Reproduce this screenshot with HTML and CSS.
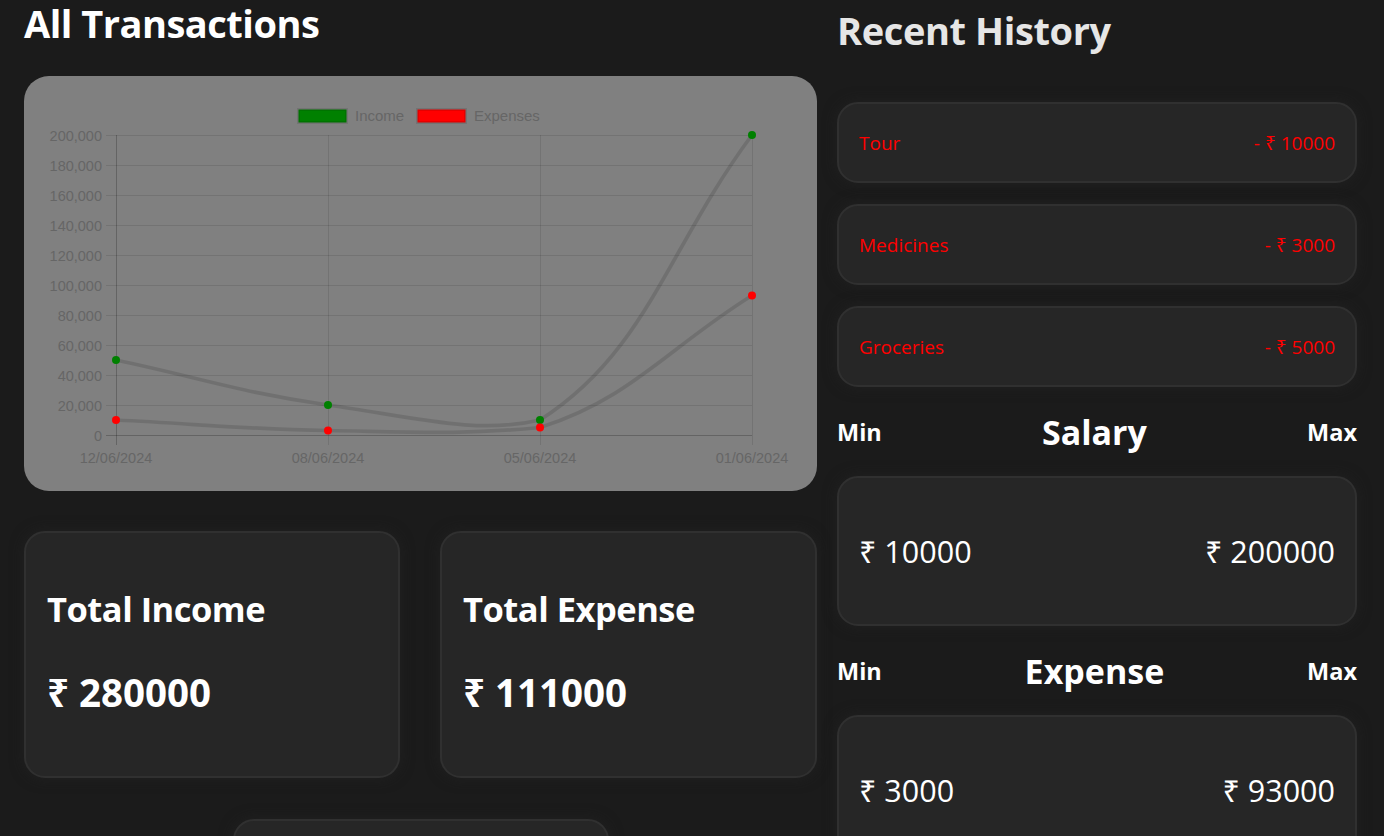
FILE: index.html
```html
<!DOCTYPE html>
<html lang="en">
<head>
<meta charset="utf-8">
<title>Dashboard</title>
<link rel="stylesheet" href="styles.css">
</head>
<body>
<div class="page">
  <section class="left">
    <h1 class="title">All Transactions</h1>
    <div class="chart-card">
      <svg class="chart" width="793" height="415" viewBox="24 76 793 415" xmlns="http://www.w3.org/2000/svg">
        <g class="legend">
          <rect x="298.5" y="109.5" width="48" height="13" fill="#008000" stroke="rgba(0,0,0,0.1)" stroke-width="3"/>
          <text x="355" y="120.5">Income</text>
          <rect x="417.5" y="109.5" width="48" height="13" fill="#ff0000" stroke="rgba(0,0,0,0.1)" stroke-width="3"/>
          <text x="474" y="120.5">Expenses</text>
        </g>
        <g class="grid">
          <line x1="106" y1="135.5" x2="752" y2="135.5"/>
          <line x1="106" y1="165.5" x2="752" y2="165.5"/>
          <line x1="106" y1="195.5" x2="752" y2="195.5"/>
          <line x1="106" y1="225.5" x2="752" y2="225.5"/>
          <line x1="106" y1="255.5" x2="752" y2="255.5"/>
          <line x1="106" y1="285.5" x2="752" y2="285.5"/>
          <line x1="106" y1="315.5" x2="752" y2="315.5"/>
          <line x1="106" y1="345.5" x2="752" y2="345.5"/>
          <line x1="106" y1="375.5" x2="752" y2="375.5"/>
          <line x1="106" y1="405.5" x2="752" y2="405.5"/>
          <line x1="328.5" y1="135" x2="328.5" y2="445"/>
          <line x1="540.5" y1="135" x2="540.5" y2="445"/>
          <line x1="752.5" y1="135" x2="752.5" y2="445"/>
        </g>
        <g class="axis">
          <line x1="106" y1="435.5" x2="752" y2="435.5"/>
          <line x1="116.5" y1="135" x2="116.5" y2="445"/>
        </g>
        <g class="ylabels">
          <text x="102" y="140.5">200,000</text>
          <text x="102" y="170.5">180,000</text>
          <text x="102" y="200.5">160,000</text>
          <text x="102" y="230.5">140,000</text>
          <text x="102" y="260.5">120,000</text>
          <text x="102" y="290.5">100,000</text>
          <text x="102" y="320.5">80,000</text>
          <text x="102" y="350.5">60,000</text>
          <text x="102" y="380.5">40,000</text>
          <text x="102" y="410.5">20,000</text>
          <text x="102" y="440.5">0</text>
        </g>
        <g class="xlabels">
          <text x="116" y="462.5">12/06/2024</text>
          <text x="328" y="462.5">08/06/2024</text>
          <text x="540" y="462.5">05/06/2024</text>
          <text x="752" y="462.5">01/06/2024</text>
        </g>
        <g class="series">
          <path d="M116,360 C200.8,378 242.4,392.9 328,405 C412,416.9 476.5,435 540,420 C646.2,352.4 667.2,249 752,135"/>
          <path d="M116,420 C200.8,424.2 243.2,429 328,430.5 C412.8,432 462.1,435 540,427.5 C631.7,398.3 667.2,348.3 752,295.5"/>
        </g>
        <g class="pts-income">
          <circle cx="116" cy="360" r="4"/>
          <circle cx="328" cy="405" r="4"/>
          <circle cx="540" cy="420" r="4"/>
          <circle cx="752" cy="135" r="4"/>
        </g>
        <g class="pts-expense">
          <circle cx="116" cy="420" r="4"/>
          <circle cx="328" cy="430.5" r="4"/>
          <circle cx="540" cy="427.5" r="4"/>
          <circle cx="752" cy="295.5" r="4"/>
        </g>
      </svg>
    </div>
    <div class="totals">
      <div class="card total">
        <h2 class="total-title">Total Income</h2>
        <p class="total-value">₹ 280000</p>
      </div>
      <div class="card total">
        <h2 class="total-title">Total Expense</h2>
        <p class="total-value">₹ 111000</p>
      </div>
      <div class="card total total-wide"></div>
    </div>
  </section>
  <section class="right">
    <h2 class="history-title">Recent History</h2>
    <div class="card history-item"><span>Tour</span><span>- ₹ 10000</span></div>
    <div class="card history-item"><span>Medicines</span><span>- ₹ 3000</span></div>
    <div class="card history-item"><span>Groceries</span><span>- ₹ 5000</span></div>
    <div class="range-head"><span class="range-label">Min</span><span class="range-title">Salary</span><span class="range-label">Max</span></div>
    <div class="card range"><span>₹ 10000</span><span>₹ 200000</span></div>
    <div class="range-head"><span class="range-label">Min</span><span class="range-title">Expense</span><span class="range-label">Max</span></div>
    <div class="card range"><span>₹ 3000</span><span>₹ 93000</span></div>
  </section>
</div>
</body>
</html>
```

FILE: styles.css
```css
html, body {
  margin: 0;
  padding: 0;
}
body {
  background: #1b1b1b;
  color: #ffffff;
  font-family: "Open Sans", "Noto Sans", "DejaVu Sans", sans-serif;
  overflow: hidden;
}
.page {
  display: grid;
  grid-template-columns: 793px 520px;
  column-gap: 20px;
  padding-left: 24px;
  align-items: start;
}
.title {
  margin: 0 0 30px 0;
  padding-top: 1px;
  font-size: 38px;
  letter-spacing: -0.5px;
  line-height: 45px;
  font-weight: 700;
  color: #ffffff;
}
.chart-card {
  height: 415px;
  background: #808080;
  border-radius: 25px;
  overflow: hidden;
}
.chart {
  display: block;
  font-family: "Liberation Sans", Arial, sans-serif;
}
.legend text {
  font-size: 15px;
  fill: #666666;
}
.grid line {
  stroke: rgba(0, 0, 0, 0.1);
  stroke-width: 1;
}
.axis line {
  stroke: rgba(0, 0, 0, 0.22);
  stroke-width: 1;
}
.ylabels text {
  font-size: 14.5px;
  fill: #666666;
  text-anchor: end;
}
.xlabels text {
  font-size: 14.5px;
  fill: #666666;
  text-anchor: middle;
}
.series path {
  fill: none;
  stroke: rgba(0, 0, 0, 0.12);
  stroke-width: 3.75;
}
.pts-income circle {
  fill: #008000;
}
.pts-expense circle {
  fill: #ff0000;
}
.card {
  background: #262626;
  border: 2px solid #303030;
  border-radius: 21px;
  box-sizing: border-box;
  box-shadow: 0 0 14px rgba(36, 36, 36, 0.6);
}
.totals {
  display: grid;
  grid-template-columns: 376px 377px;
  column-gap: 40px;
  row-gap: 41px;
  margin-top: 40px;
}
.total {
  height: 247px;
  padding: 52px 20px 0 21px;
}
.total-wide {
  grid-column: 1 / span 2;
  justify-self: center;
  width: 376px;
}
.total-title {
  margin: 0;
  font-size: 34.5px;
  letter-spacing: -0.5px;
  line-height: 48px;
  font-weight: 700;
}
.total-value {
  margin: 35px 0 0 0;
  font-size: 38.5px;
  line-height: 48px;
  font-weight: 700;
}
.history-title {
  margin: 5px 0 47px 0;
  font-size: 38px;
  letter-spacing: -0.4px;
  line-height: 50px;
  font-weight: 700;
  color: #e6e6e6;
}
.history-item {
  height: 81px;
  margin-bottom: 21px;
  padding: 0 20px;
  display: flex;
  justify-content: space-between;
  align-items: center;
  color: #ff0000;
  font-size: 19px;
}
.history-item:nth-of-type(3) {
  margin-bottom: 0;
}
.range-head {
  height: 89px;
  display: flex;
  justify-content: space-between;
  align-items: center;
  font-weight: 700;
}
.range-label {
  font-size: 23.5px;
}
.range-title {
  font-size: 34px;
}
.range {
  height: 150px;
  padding: 0 20px;
  display: flex;
  justify-content: space-between;
  align-items: center;
  font-size: 30.5px;
}
```
